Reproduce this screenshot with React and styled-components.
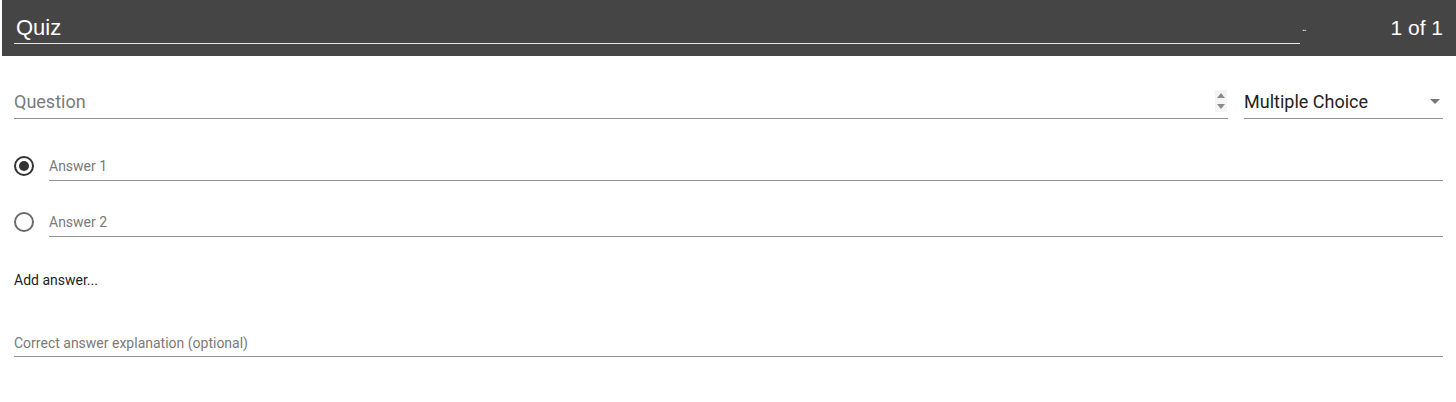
import React from 'react'
import styled, { createGlobalStyle } from 'styled-components'

const GlobalStyle = createGlobalStyle`
  body {
    margin: 0;
    background: #fff;
    font-family: Roboto, "Liberation Sans", sans-serif;
  }
  *, *::before, *::after {
    box-sizing: border-box;
  }
`

const Header = styled.div`
  margin-left: 2px;
  height: 56px;
  background: #454545;
  display: flex;
  align-items: center;
  padding: 0 13px 0 12px;
  font-family: "Liberation Sans", Arial, sans-serif;
  color: #fff;
`

const TitleField = styled.div`
  width: 1286px;
  height: 30px;
  margin-top: 1px;
  border-bottom: 1px solid #e6e6e6;
  font-size: 22px;
  line-height: 28px;
  padding-left: 2px;
`

const Dots = styled.span`
  margin-left: 2px;
  margin-top: -2px;
  font-size: 10px;
  letter-spacing: -1px;
  color: #fff;
`

const Counter = styled.div`
  margin-left: auto;
  font-size: 21px;
  padding-bottom: 1px;
`

const Body = styled.div`
  padding: 0 13px 0 14px;
`

const QuestionRow = styled.div`
  display: flex;
  gap: 16px;
  margin-top: 24px;
`

const Field = styled.div`
  flex: 1;
  display: flex;
  align-items: center;
  height: ${(p) => p.h}px;
  padding-top: ${(p) => p.pt || 0}px;
  border-bottom: 1px solid #939393;
  font-size: ${(p) => p.size}px;
  color: ${(p) => (p.filled ? '#222' : '#7a7a7a')};
`

const Select = styled(Field)`
  flex: 0 0 199px;
  justify-content: space-between;
  padding-right: 3px;
`

const Spinner = styled.svg`
  margin-left: auto;
  margin-right: 1px;
`

const AnswerList = styled.div`
  display: flex;
  flex-direction: column;
  gap: 27px;
  margin-top: 33px;
`

const AnswerRow = styled.div`
  display: flex;
  align-items: flex-start;
  gap: 15px;
`

const Radio = styled.span`
  flex: none;
  width: 20px;
  height: 20px;
  margin-top: 4px;
  border-radius: 50%;
  border: 2px solid ${(p) => (p.checked ? '#333' : '#6b6b6b')};
  display: flex;
  align-items: center;
  justify-content: center;
  &::after {
    content: '';
    display: ${(p) => (p.checked ? 'block' : 'none')};
    width: 10px;
    height: 10px;
    border-radius: 50%;
    background: #333;
  }
`

const AddAnswer = styled.div`
  margin-top: 35px;
  font-size: 14px;
  line-height: 16px;
  color: #222;
`

const Explanation = styled.div`
  margin-top: 41px;
  display: flex;
`

const answers = [
  { label: 'Answer 1', checked: true },
  { label: 'Answer 2', checked: false },
]

const App = () => {
  return (
    <>
      <GlobalStyle />
      <Header>
        <TitleField>Quiz</TitleField>
        <Dots>..</Dots>
        <Counter>1 of 1</Counter>
      </Header>
      <Body>
        <QuestionRow>
          <Field h={39} pt={4} size={18}>
            Question
            <Spinner width="12" height="22" viewBox="0 0 12 22">
              <rect width="12" height="22" fill="#f4f4f4" />
              <path d="M2 8 L6 3 L10 8 Z" fill="#8a8a8a" />
              <path d="M2 14 L6 19 L10 14 Z" fill="#8a8a8a" />
            </Spinner>
          </Field>
          <Select h={39} pt={4} size={18} filled>
            Multiple Choice
            <svg width="10" height="5" viewBox="0 0 10 5">
              <path d="M0 0 L10 0 L5 5 Z" fill="#757575" />
            </svg>
          </Select>
        </QuestionRow>
        <AnswerList>
          {answers.map((a) => (
            <AnswerRow key={a.label}>
              <Radio checked={a.checked} />
              <Field h={29} size={14}>{a.label}</Field>
            </AnswerRow>
          ))}
        </AnswerList>
        <AddAnswer>Add answer...</AddAnswer>
        <Explanation>
          <Field h={28} size={14}>Correct answer explanation (optional)</Field>
        </Explanation>
      </Body>
    </>
  )
}

export default App
